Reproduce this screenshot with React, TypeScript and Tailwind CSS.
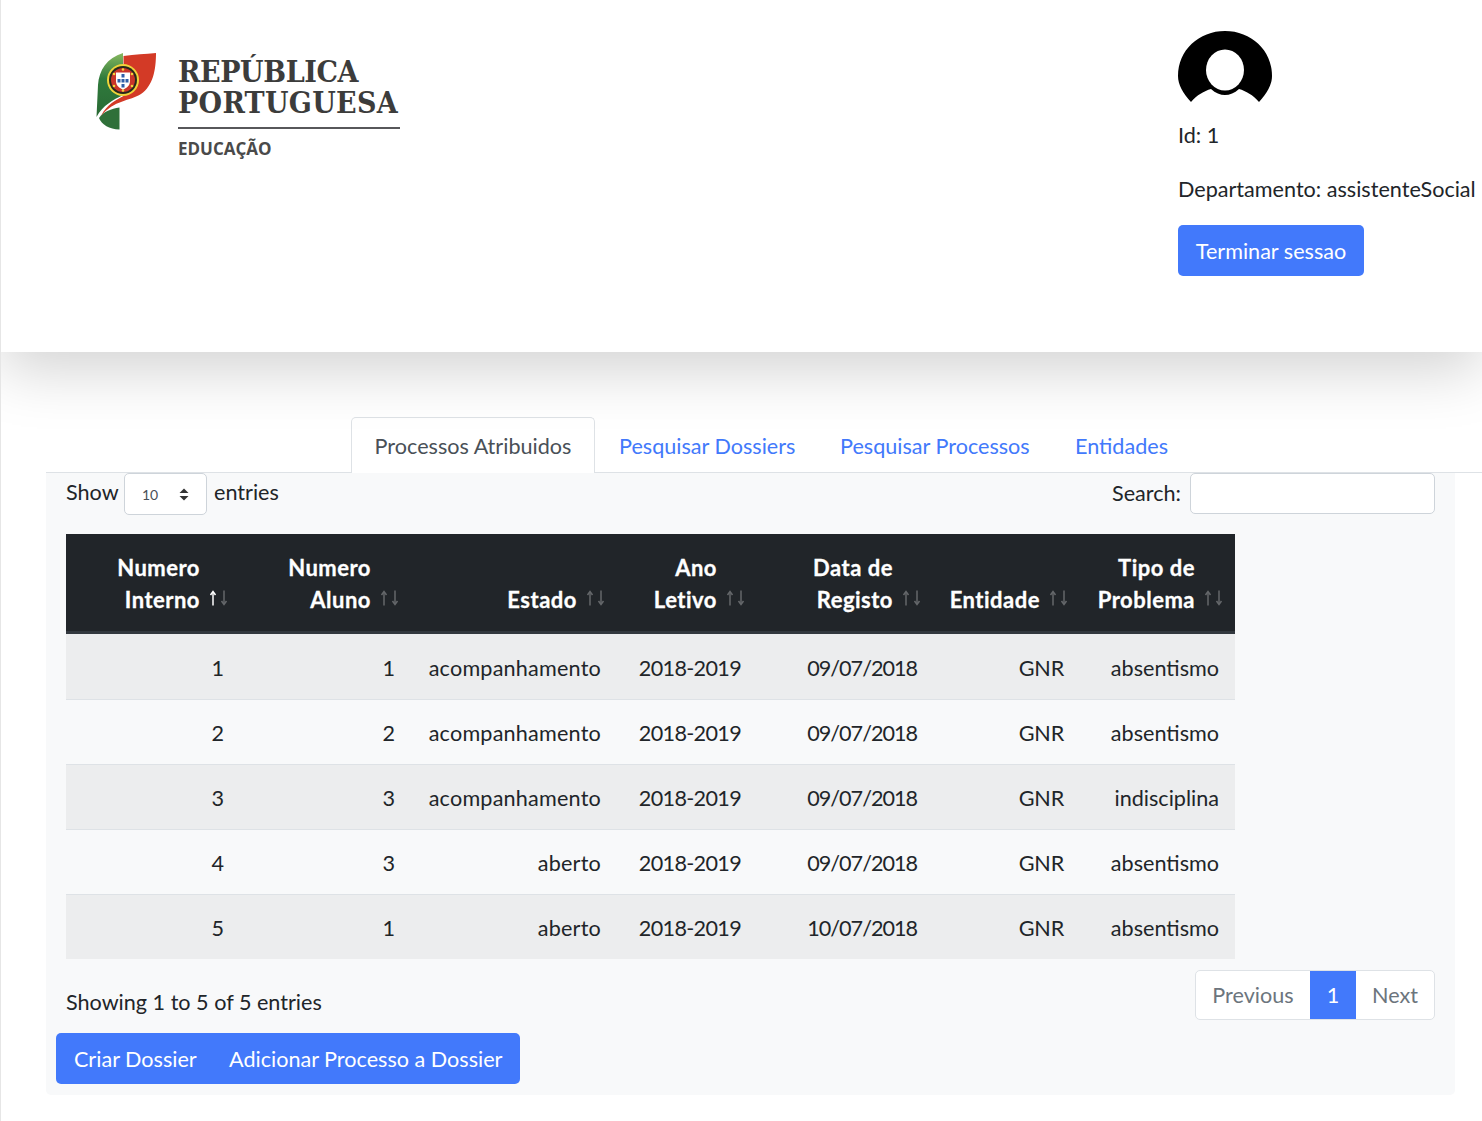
import React from "react";

const rows = [
  ["1", "1", "acompanhamento", "2018-2019", "09/07/2018", "GNR", "absentismo"],
  ["2", "2", "acompanhamento", "2018-2019", "09/07/2018", "GNR", "absentismo"],
  ["3", "3", "acompanhamento", "2018-2019", "09/07/2018", "GNR", "indisciplina"],
  ["4", "3", "aberto", "2018-2019", "09/07/2018", "GNR", "absentismo"],
  ["5", "1", "aberto", "2018-2019", "10/07/2018", "GNR", "absentismo"],
];

const columnTracking = [
  "tracking-normal",
  "tracking-normal",
  "tracking-[0.2px]",
  "tracking-[-0.67px]",
  "tracking-[-1px]",
  "tracking-[-0.2px]",
  "tracking-normal",
];

const headers: { lines: string[]; active?: boolean }[] = [
  { lines: ["Numero", "Interno"], active: true },
  { lines: ["Numero", "Aluno"] },
  { lines: ["Estado"] },
  { lines: ["Ano", "Letivo"] },
  { lines: ["Data de", "Registo"] },
  { lines: ["Entidade"] },
  { lines: ["Tipo de", "Problema"] },
];

function SortArrows({ active }: { active?: boolean }) {
  return (
    <svg
      className="absolute right-[9px] bottom-[25px]"
      width="22"
      height="16"
      viewBox="0 0 22 16"
      fill="none"
      stroke="#ffffff"
      strokeWidth="1.5"
    >
      <g opacity={active ? 1 : 0.3}>
        <path d="M4 15.500V2" />
        <path d="M1.500 5L4 1.500L6.500 5" />
      </g>
      <g opacity="0.3">
        <path d="M15 0.500V14" />
        <path d="M12.500 11L15 14.500L17.500 11" />
      </g>
    </svg>
  );
}

function Emblem() {
  return (
    <svg width="75" height="90" viewBox="0 0 75 90" className="shrink-0">
      <defs>
        <linearGradient id="lg" x1="0" y1="0" x2="0" y2="1">
          <stop offset="0" stopColor="#86b85f" />
          <stop offset="0.4" stopColor="#2f7a3c" />
          <stop offset="1" stopColor="#2a6a35" />
        </linearGradient>
      </defs>
      <path d="M33 8C17 13 9 25 8 40L6.500 72C13 60 23 55 33 50Z" fill="url(#lg)" />
      <path d="M9 73C14 66 21 64 29.500 62.500V84.500C19 84 12 80 9 73Z" fill="#2f7039" />
      <path d="M33.500 11C45 9.500 55 9 66 8C66 25 63 41 51 49C40 56 24 55 11 71C17 59 26 55 33.500 51Z" fill="#d33a26" />
      <circle cx="33" cy="35" r="16" fill="#f0d43a" />
      <circle cx="33" cy="35" r="14" fill="#27291c" />
      <path d="M21 35A12 12 0 0 1 45 35A12 12 0 0 1 21 35Z" fill="#c9352a" />
      <g fill="#f0d43a">
        <circle cx="33" cy="24.500" r="1.300" />
        <circle cx="24" cy="29" r="1.300" />
        <circle cx="42" cy="29" r="1.300" />
        <circle cx="24" cy="41" r="1.300" />
        <circle cx="42" cy="41" r="1.300" />
        <circle cx="33" cy="45.500" r="1.300" />
      </g>
      <path d="M26 27.500H40V36C40 41 36.500 43 33 44.500C29.500 43 26 41 26 36Z" fill="#ffffff" />
      <g fill="#2f5ea8">
        <rect x="31.500" y="29" width="3" height="3.500" />
        <rect x="31.500" y="34" width="3" height="3.500" />
        <rect x="31.500" y="39" width="3" height="3.500" />
        <rect x="27.500" y="34" width="3" height="3.500" />
        <rect x="35.500" y="34" width="3" height="3.500" />
      </g>
    </svg>
  );
}

function Avatar() {
  return (
    <svg width="94" height="76" viewBox="0 0 94 76" className="block">
      <path d="M13 71C5 62 0 54 0 45C0 19 21 0 47 0C73 0 94 19 94 45C94 54 89 62 81 71C75 64 68 60 61 58C52 66 42 66 33 58C26 60 19 64 13 71Z" fill="#000000" />
      <ellipse cx="47" cy="39" rx="19" ry="20.500" fill="#ffffff" />
    </svg>
  );
}

export default function App() {
  return (
    <div className="h-[1121px] overflow-hidden border-l border-[#e6e6e6] bg-white font-['Lato',sans-serif] text-[21.6px] leading-[32px] text-[#212529]">
      <header className="relative z-10 flex h-[352px] bg-white shadow-[0_18px_56px_rgba(0,0,0,0.175)]">
        <div className="ml-[89px] mt-[45px] flex w-[1088px] items-start">
          <Emblem />
          <div className="ml-[13px] mt-[11px] w-[222px] text-[#3c3c3b]">
            <div className="whitespace-nowrap font-['DejaVu_Serif_Condensed','DejaVu_Serif',serif] text-[30px] font-bold leading-[31px]">
              <div className="h-[31px] overflow-visible tracking-[-0.4px]">REPÚBLICA</div>
              <div className="h-[31px] overflow-visible tracking-[0.3px]">PORTUGUESA</div>
            </div>
            <div className="mt-[9px] h-[2px] bg-[#57575a]" />
            <div className="mt-[8px] font-['Open_Sans',sans-serif] text-[17px] font-bold leading-[24px] text-[#4a4a4a]">
              EDUCAÇÃO
            </div>
          </div>
        </div>
        <div className="pt-[31px]">
          <div className="h-[88px]">
            <Avatar />
          </div>
          <p className="mb-[21px] whitespace-nowrap">Id: 1</p>
          <p className="mb-[21px] whitespace-nowrap pt-px">Departamento: assistenteSocial</p>
          <button className="-mt-px h-[51px] w-[186px] rounded-[5px] bg-[#4279fb] pt-px text-white">Terminar sessao</button>
        </div>
      </header>

      <main className="ml-[45px] mt-[65px]">
        <nav className="flex h-[56px] border-b border-[#dee2e6] pl-[305px] text-[#4279fb]">
          <a className="flex h-[56px] w-[244px] justify-center rounded-t-[5px] border border-b-0 border-[#dee2e6] bg-white pt-[12px] text-[#495057]">
            Processos Atribuidos
          </a>
          <a className="w-[221px] pl-[24px] pt-[13px]">Pesquisar Dossiers</a>
          <a className="w-[235px] pl-[24px] pt-[13px]">Pesquisar Processos</a>
          <a className="pl-[24px] pt-[13px]">Entidades</a>
        </nav>

        <section className="w-[1409px] rounded-b-[5px] bg-[#f8f9fa] px-[10px] pb-[11px]">
          <div className="flex items-start justify-between pl-[10px] pr-[10px]">
            <div className="flex items-start">
              <span className="w-[58px] pt-[3px]">Show</span>
              <div className="relative mr-[7px]">
                <select className="block h-[42px] w-[83px] appearance-none rounded-[5px] border border-[#ced4da] bg-white pl-[17px] pt-[2px] text-[14px] text-[#495057]">
                  <option>10</option>
                </select>
                <svg className="absolute right-[18px] top-[15px]" width="10" height="13" viewBox="0 0 10 13" fill="#333333">
                  <path d="M5 0.500L9.500 5H0.500Z" />
                  <path d="M5 12.500L0.500 8H9.500Z" />
                </svg>
              </div>
              <span className="pt-[3px]">entries</span>
            </div>
            <label className="flex items-start">
              <span className="pt-[4px]">Search:</span>
              <input className="ml-[9px] block h-[41px] w-[245px] rounded-[5px] border border-[#ced4da] bg-white" />
            </label>
          </div>

          <div className="ml-[10px] mt-[19px]">
            <table className="w-[1169px] table-fixed border-separate border-spacing-0">
              <colgroup>
                <col className="w-[174px]" />
                <col className="w-[171px]" />
                <col className="w-[206px]" />
                <col className="w-[140px]" />
                <col className="w-[176px]" />
                <col className="w-[147px]" />
                <col className="w-[155px]" />
              </colgroup>
              <thead>
                <tr className="bg-[#212529] text-white">
                  {headers.map((h) => (
                    <th
                      key={h.lines.join(" ")}
                      className="relative border-b-[3px] border-[#32383e] pb-[15px] pl-[8px] pr-[40px] pt-[18px] text-right align-bottom text-[22px] font-bold tracking-[0.5px] [-webkit-text-stroke:0.3px_#ffffff]"
                    >
                      {h.lines.map((l, i) => (
                        <React.Fragment key={l}>
                          {i > 0 && <br />}
                          {l}
                        </React.Fragment>
                      ))}
                      <SortArrows active={h.active} />
                    </th>
                  ))}
                </tr>
              </thead>
              <tbody>
                {rows.map((r, i) => (
                  <tr key={r[0]} className={i % 2 === 0 ? "h-[65px] bg-[#ecedee]" : "h-[65px]"}>
                    {r.map((c, j) => (
                      <td
                        key={j}
                        className={
                          i === 0
                            ? "whitespace-nowrap px-[16px] pt-[2px] text-right align-middle"
                            : "whitespace-nowrap border-t border-[#dee2e6] px-[16px] pt-[2px] text-right align-middle"
                        }
                      >
                        <span className={columnTracking[j]}>{c}</span>
                      </td>
                    ))}
                  </tr>
                ))}
              </tbody>
            </table>
          </div>

          <div className="mt-[11px] flex items-start justify-between pl-[10px] pr-[10px]">
            <div className="pt-[16px]">Showing 1 to 5 of 5 entries</div>
            <div className="flex h-[50px] items-stretch overflow-hidden rounded-[5px] border border-[#dee2e6] bg-white text-[#6c757d]">
              <span className="flex w-[114px] items-center justify-center">Previous</span>
              <span className="-my-px flex w-[46px] items-center justify-center bg-[#4279fb] text-white">1</span>
              <span className="flex w-[78px] items-center justify-center">Next</span>
            </div>
          </div>

          <div className="mt-[13px] flex h-[51px] w-[464px] items-center rounded-[5px] bg-[#4279fb] text-white">
            <button className="w-[173px] pl-[18px] text-left">Criar Dossier</button>
            <button>Adicionar Processo a Dossier</button>
          </div>
        </section>
      </main>
    </div>
  );
}
